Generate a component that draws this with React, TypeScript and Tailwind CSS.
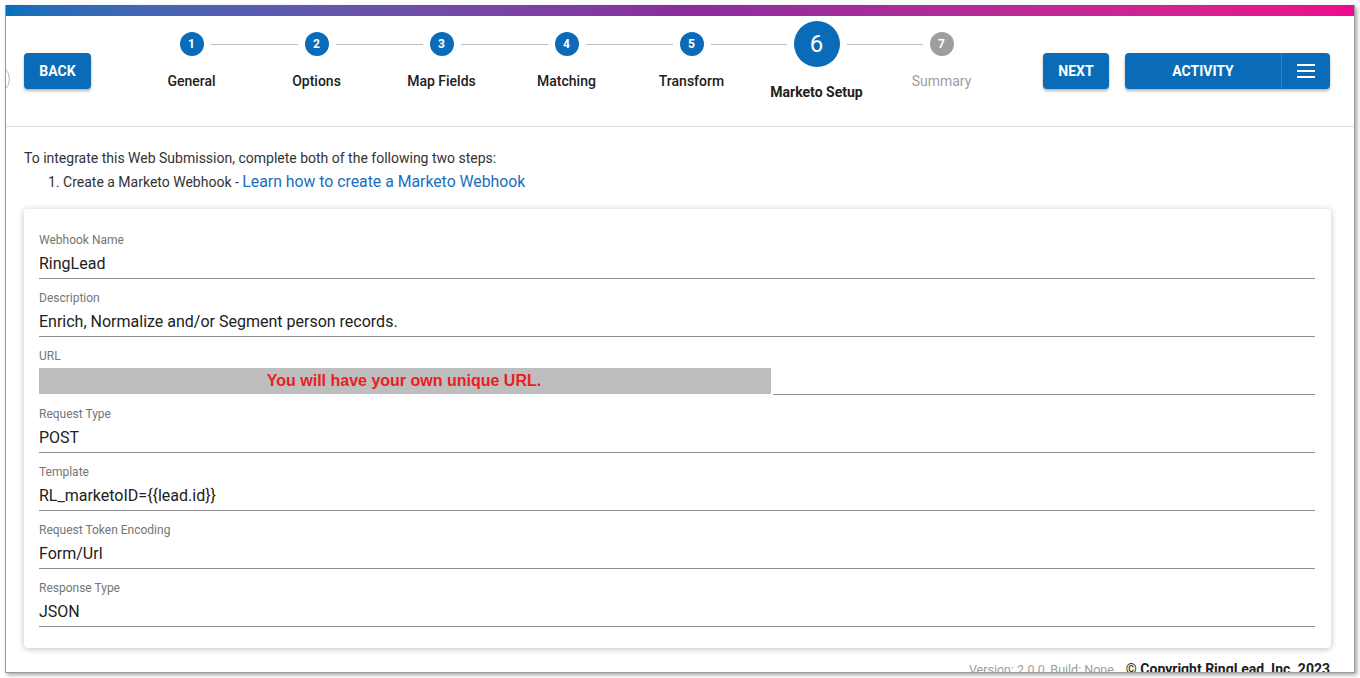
import React from 'react';

const steps = [
  { n: 1, label: 'General' },
  { n: 2, label: 'Options' },
  { n: 3, label: 'Map Fields' },
  { n: 4, label: 'Matching' },
  { n: 5, label: 'Transform' },
  { n: 6, label: 'Marketo Setup' },
  { n: 7, label: 'Summary' },
];

const ACTIVE = 6;

const fields = [
  { label: 'Webhook Name', value: 'RingLead' },
  { label: 'Description', value: 'Enrich, Normalize and/or Segment person records.' },
  { label: 'URL', value: null },
  { label: 'Request Type', value: 'POST' },
  { label: 'Template', value: 'RL_marketoID={{lead.id}}' },
  { label: 'Request Token Encoding', value: 'Form/Url' },
  { label: 'Response Type', value: 'JSON' },
];

function Step({ n, label, first, last }: { n: number; label: string; first: boolean; last: boolean }) {
  const active = n === ACTIVE;
  const future = n > ACTIVE;
  return (
    <div className={`flex w-[125px] flex-none flex-col items-center ${active ? '' : 'mt-[11px]'}`}>
      <div className="flex w-full items-center">
        <div className={`mr-[7px] h-px flex-1 ${first ? 'bg-transparent' : 'bg-[#bdbdbd]'}`} />
        {active ? (
          <div className="flex h-[46px] w-[46px] flex-none items-center justify-center rounded-full bg-[#0a6cb8] text-[24px] text-white">
            {n}
          </div>
        ) : (
          <div
            className={`flex h-[24px] w-[24px] flex-none items-center justify-center rounded-full text-[12px] font-bold text-white ${
              future ? 'bg-[#9e9e9e]' : 'bg-[#0a6cb8]'
            }`}
          >
            {n}
          </div>
        )}
        <div className={`ml-[7px] h-px flex-1 ${last ? 'bg-transparent' : 'bg-[#bdbdbd]'}`} />
      </div>
      <div
        className={`mt-[17px] whitespace-nowrap text-[14px] leading-[16px] ${
          active ? 'font-bold text-[#212121]' : future ? 'text-[#9e9e9e]' : 'font-medium text-[#212121]'
        }`}
      >
        {label}
      </div>
    </div>
  );
}

function Field({ label, value }: { label: string; value: string | null }) {
  return (
    <div className="mb-[12px]">
      <div className="h-[14px] text-[12px] leading-[14px] text-[#757575]">{label}</div>
      {value !== null ? (
        <div className="mt-[4px] flex h-[28px] items-center border-b border-[#8f8f8f] pb-[2px] text-[16px] text-[#212121]">
          {value}
        </div>
      ) : (
        <div className="mt-[4px] flex h-[28px] items-start">
          <div
            className="mt-[1px] flex h-[26px] w-[732px] flex-none items-center justify-center bg-[#bebebe] pr-[2px] text-[16px] font-bold text-[#ec1c24]"
            style={{ fontFamily: '"Liberation Sans", Arial, sans-serif' }}
          >
            You will have your own unique URL.
          </div>
          <div className="ml-[2px] h-[28px] flex-1 border-b border-[#8f8f8f]" />
        </div>
      )}
    </div>
  );
}

export default function App() {
  return (
    <div
      className="h-[678px] w-[1360px] overflow-hidden bg-white pl-[5px] pt-[5px]"
      style={{ fontFamily: 'Roboto, "Noto Sans", sans-serif' }}
    >
      <div className="flex h-[668px] w-[1350px] flex-col overflow-hidden border border-t-0 border-[#9a9a9a] bg-white shadow-[2px_2px_4px_rgba(0,0,0,0.35)]">
        <div className="h-[11px] flex-none bg-gradient-to-r from-[#0070bb] via-[#8a2c9e] to-[#ee0a8c]" />

        <div className="relative flex h-[111px] flex-none items-center border-b border-[#dedede] pl-[18px] pr-[23px]">
          <div className="absolute left-[-28px] top-[48px] h-[30px] w-[32px] rounded-full border border-[#b5b5b5]" />

          <button className="h-[36px] w-[67px] flex-none rounded-[4px] bg-[#0a6cb8] text-[14px] font-bold text-white shadow-[0_2px_3px_rgba(0,0,0,0.3)]">
            BACK
          </button>

          <div className="ml-[38px] flex flex-none items-start self-start pt-[5px]">
            {steps.map((s, i) => (
              <Step key={s.n} n={s.n} label={s.label} first={i === 0} last={i === steps.length - 1} />
            ))}
          </div>

          <button className="ml-[39px] h-[36px] w-[66px] flex-none rounded-[4px] bg-[#0a6cb8] text-[14px] font-bold text-white shadow-[0_2px_3px_rgba(0,0,0,0.3)]">
            NEXT
          </button>

          <div className="ml-[16px] flex h-[36px] w-[205px] flex-none overflow-hidden rounded-[4px] bg-[#0a6cb8] text-white shadow-[0_2px_3px_rgba(0,0,0,0.3)]">
            <div className="flex flex-1 items-center justify-center text-[14px] font-bold">ACTIVITY</div>
            <div className="flex w-[49px] flex-none items-center justify-center border-l border-[#2f86cc]">
              <svg width="18" height="14" viewBox="0 0 18 14" fill="#ffffff">
                <rect x="0" y="0" width="18" height="2" />
                <rect x="0" y="6" width="18" height="2" />
                <rect x="0" y="12" width="18" height="2" />
              </svg>
            </div>
          </div>
        </div>

        <div className="flex flex-col pl-[18px] pr-[23px] pt-[22px]">
          <div className="text-[14px] leading-[18px] text-[#333333]">
            To integrate this Web Submission, complete both of the following two steps:
          </div>
          <div className="mt-[4px] pl-[24px] text-[14px] leading-[22px] text-[#333333]">
            1. Create a Marketo Webhook -{' '}
            <span className="text-[15.8px] text-[#1a6ec2]">Learn how to create a Marketo Webhook</span>
          </div>

          <div className="mt-[16px] rounded-[4px] bg-white pb-[9px] pl-[15px] pr-[16px] pt-[24px] shadow-[0_1px_6px_rgba(0,0,0,0.25)]">
            {fields.map((f) => (
              <Field key={f.label} label={f.label} value={f.value} />
            ))}
          </div>

          <div className="mt-[11px] flex items-baseline justify-end gap-[12px] pr-[1px]">
            <span className="text-[12.5px] text-[#9e9e9e]">Version: 2.0.0, Build: None</span>
            <span className="text-[14px] font-bold text-[#212121]">© Copyright RingLead, Inc. 2023</span>
          </div>
        </div>
      </div>
    </div>
  );
}
